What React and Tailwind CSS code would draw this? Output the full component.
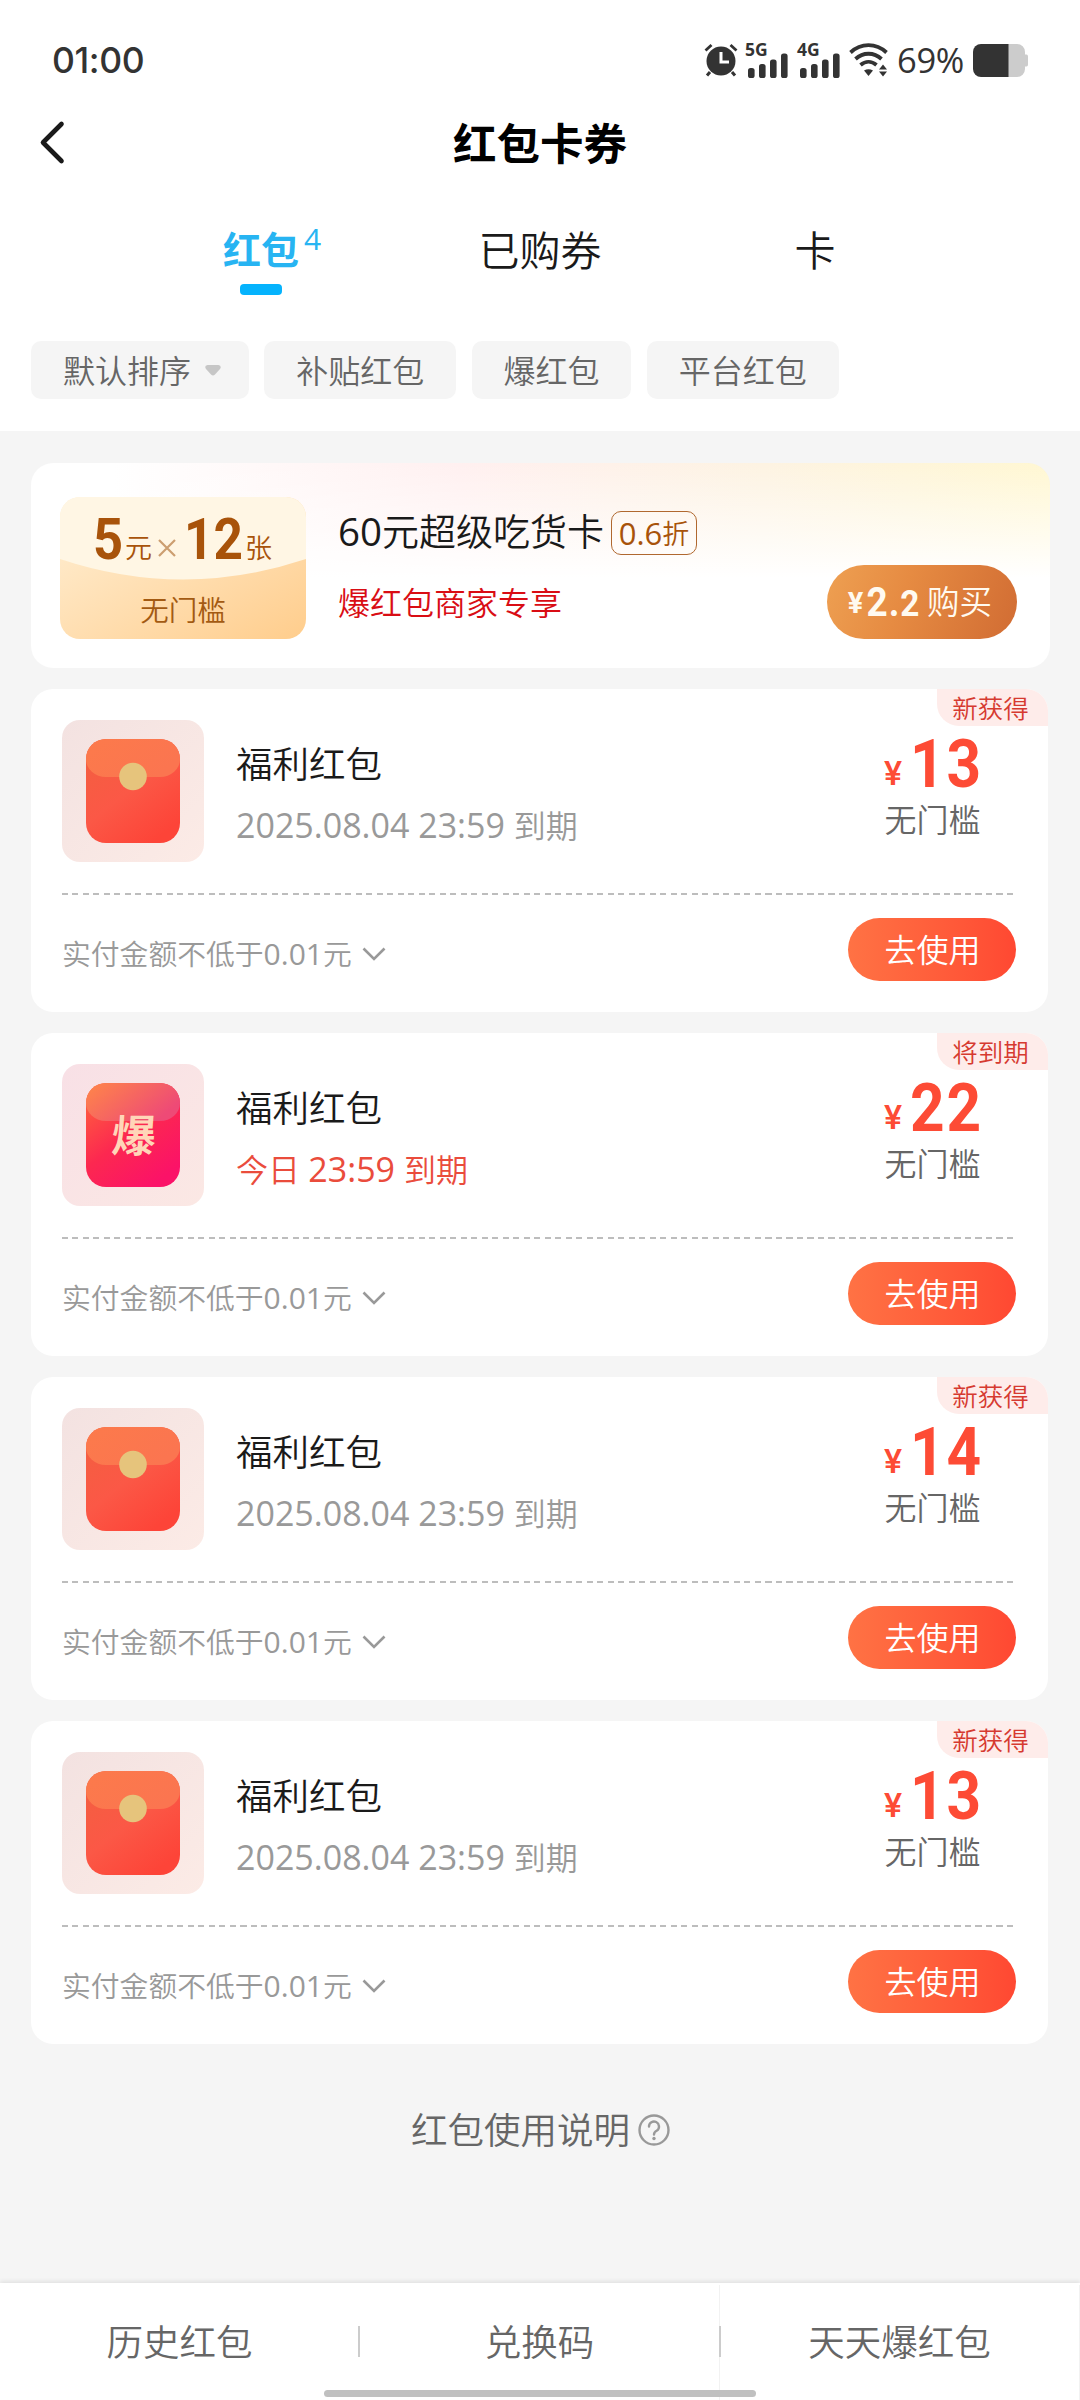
import { useId } from 'react'

const tabs = [
  { label: '红包', count: 4, active: true },
  { label: '已购券' },
  { label: '卡' },
]

const filters = [
  { label: '默认排序', caret: true },
  { label: '补贴红包' },
  { label: '爆红包' },
  { label: '平台红包' },
]

const coupons = [
  { id: 1, tag: '新获得', amount: 13, time: '2025.08.04 23:59' },
  { id: 2, tag: '将到期', amount: 22, day: '今日', time: '23:59', hot: true },
  { id: 3, tag: '新获得', amount: 14, time: '2025.08.04 23:59' },
  { id: 4, tag: '新获得', amount: 13, time: '2025.08.04 23:59' },
]

function Signal({ label }) {
  return (
    <svg width="44" height="36" viewBox="0 0 44 36" fill="#333" className="overflow-visible">
      <text x="-1" y="13.500" fontSize="17.500" fontWeight="700" fontFamily="Open Sans, sans-serif">{label}</text>
      <rect x="2" y="26" width="6.6" height="10" rx="2.6" />
      <rect x="13" y="22" width="6.6" height="14" rx="2.6" />
      <rect x="24" y="17.5" width="6.6" height="18.5" rx="2.6" />
      <rect x="35" y="11.500" width="6.600" height="24.500" rx="2.6" />
    </svg>
  )
}

function StatusBar() {
  return (
    <div className="flex h-[116px] items-center justify-between pl-[52px] pr-[52px] pt-1 text-[#333]">
      <span className="mt-[2px] font-[Inter] text-[35.500px] leading-none font-medium tracking-[-0.4px]">01:00</span>
      <div className="flex items-center">
        <svg width="34" height="34" viewBox="0 0 34 34" fill="none" stroke="#333" className="mr-2">
          <circle cx="17" cy="18" r="14.500" fill="#333" stroke="none" />
          <path d="M1.500 7.500 7.500 2M32.500 7.500 26.500 2" strokeWidth="2.8" />
          <path d="M6 29 3 32.500M28 29l3 3.500" strokeWidth="3" />
          <path d="M17 9v10h8" stroke="#fff" strokeWidth="3" />
        </svg>
        <Signal label="5G" />
        <span className="w-2" />
        <Signal label="4G" />
        <svg width="40" height="34" viewBox="0 0 40 34" fill="none" stroke="#333" strokeWidth="3.800" className="ml-[7px]">
          <path d="M1.500 9.500C12-.3 27-.3 37.500 9.500" />
          <path d="M6.500 16C14 9 25 9 32.500 16" />
          <path d="M11.500 22C16.500 17.800 22.500 17.800 27.500 22" />
          <path d="M15 27.500q4.500-2.500 9 0L19.500 33z" fill="#333" stroke="none" />
          <path d="M30 26.500h8L34 21.500zM30 28.500h8L34 33.500z" fill="#333" stroke="none" />
        </svg>
        <span className="ml-[8px] w-[76px] text-[34.500px] leading-none font-medium tracking-[-0.3px]">69%</span>
        <svg width="55" height="33" viewBox="0 0 55 33">
          <path d="M35 0H44a8 8 0 0 1 8 8v2.500h1.500q1.500 0 1.500 2v8q0 2-1.500 2H52V25a8 8 0 0 1-8 8H35z" fill="#ccc" />
          <path d="M8 0H35.500V33H8a8 8 0 0 1-8-8V8a8 8 0 0 1 8-8z" fill="#333" />
        </svg>
      </div>
    </div>
  )
}

function Header() {
  return (
    <header className="h-[431px] bg-white">
      <StatusBar />
      <div className="grid h-[56px] grid-cols-[1fr_auto_1fr] items-center pl-[39px] pr-[39px]">
        <svg width="28" height="46" viewBox="0 0 28 46" fill="none" stroke="#1a1a1a" strokeWidth="4.600" strokeLinecap="round" strokeLinejoin="round" className="-mt-[3px]">
          <path d="M22.500 4 4 22.500 22.500 41" />
        </svg>
        <h1 className="text-[43.500px] leading-none font-bold text-black">红包卡券</h1>
      </div>
      <nav className="mt-[50px] grid grid-cols-[278px_280px_270px] pl-[122px]">
        {tabs.map((tab) => (
          <div key={tab.label} className="flex flex-col items-center">
            <div className="relative flex h-[54px] items-center leading-none">
              {tab.active ? (
                <span className="text-[38px] font-bold text-[#27b4f2]">{tab.label}</span>
              ) : (
                <span className="mt-[2px] text-[41px] font-[350] text-[#1a1a1a]">{tab.label}</span>
              )}
              {tab.count ? (
                <span className="absolute top-0 left-[81px] text-[30px] leading-[34px] text-[#27b4f2]">{tab.count}</span>
              ) : null}
            </div>
            {tab.active ? <span className="mt-2 h-[11px] w-[42px] rounded-[4px] bg-[#05b3fd]" /> : null}
          </div>
        ))}
      </nav>
      <div className="mt-[46px] flex gap-[15.500px] px-[31px]">
        {filters.map((filter) => (
          <button key={filter.label} className="flex h-[58px] items-center rounded-[10px] bg-[#f5f5f5] px-[31.900px] pt-px text-[32px] leading-none font-[350] text-[#666]">
            {filter.label}
            {filter.caret ? (
              <svg width="16" height="11" viewBox="0 0 16 11" className="ml-[14px] -mr-1" fill="#c6c6c6">
                <path d="M2.500 0h11q3.500 1 1.500 4L10 9.500q-2 2-4 0L1 4Q-1 1 2.500 0z" />
              </svg>
            ) : null}
          </button>
        ))}
      </div>
    </header>
  )
}

// Roboto squeezed to DIN proportions
function Digits({ children, className }) {
  return <span className={`inline-block font-[Roboto] ${className}`}>{children}</span>
}

function SuperCard() {
  return (
    <section className="flex h-[205px] rounded-[22px] bg-white bg-[linear-gradient(180deg,rgba(255,255,255,0)_0%,#fff_56%),linear-gradient(90deg,#fff_8%,#fff0f0_42%,#fdf3e2_72%,#fff7d2_100%)] pl-[29px]">
      <div className="relative mt-[34px] h-[142px] w-[246px] overflow-hidden rounded-[20px] bg-gradient-to-br from-[#fff0d6] to-[#ffcd8c]">
        <svg width="246" height="142" viewBox="0 0 246 142" className="absolute inset-0">
          <path d="M0 0H246V62Q123 103 0 62z" fill="#fff6e4" />
        </svg>
        <div className="relative flex h-[82px] pl-[33px] text-[#a8530a]">
          <Digits className="mt-[15px] w-[32px] origin-left scale-x-[0.920] text-[57px] leading-[56px] font-bold">5</Digits>
          <span className="mt-[36px] w-[30px] text-[27px] leading-[30px] font-[350]">元</span>
          <svg width="18" height="18" viewBox="0 0 18 18" className="mt-[42px] ml-[3px]" stroke="#cc9e70" strokeWidth="2.200">
            <path d="M1 1 17 17M17 1 1 17" />
          </svg>
          <Digits className="mt-[15px] ml-[8px] w-[61px] origin-left scale-x-[0.900] text-[57px] leading-[56px] font-bold">12</Digits>
          <span className="mt-[36px] text-[27px] leading-[30px] font-[350]">张</span>
        </div>
        <p className="relative mt-[15px] text-center text-[28.500px] leading-[32px] font-[350] text-[#a35a12]">无门槛</p>
      </div>
      <div className="ml-[32px] flex-1">
        <div className="mt-[48px] flex h-[44px] items-center">
          <h2 className="-mt-[3px] text-[37px] leading-none font-[350] text-[#1a1a1a]"><span className="text-[38.500px] font-normal">60</span>元超级吃货卡</h2>
          <span className="ml-[7px] flex h-[44px] w-[86px] items-center justify-center rounded-[10px] border border-[#b0682f] text-[27px] leading-none font-[350] text-[#a8530a]"><span className="text-[31px] font-normal">0.6</span>折</span>
        </div>
        <p className="mt-[31px] text-[32px] leading-[34px] font-[350] text-[#d90d14]">爆红包商家专享</p>
      </div>
      <button className="mt-[102px] mr-[33px] flex h-[74px] w-[190px] items-center rounded-full bg-[linear-gradient(110deg,#eea052_0%,#e68b42_40%,#d16c33_100%)] pl-[18px] text-[32.500px] leading-none font-[350] text-[#fffaf0]">
        <Digits className="mt-[2px] w-[21px] text-[29px] font-bold">¥</Digits>
        <Digits className="w-[61px] origin-left scale-x-[0.900] text-[41px] font-bold tracking-[1px]">2.<span className="text-[37px]">2</span></Digits>
        购买
      </button>
    </section>
  )
}

function PacketIcon({ hot }) {
  const id = useId()
  return (
    <svg width="142" height="142" viewBox="0 0 142 142">
      <defs>
        <linearGradient id={`${id}bg`} x1="0" y1="0" x2="1" y2="1">
          <stop offset="0" stopColor={hot ? '#f8e0e6' : '#f3e2e1'} />
          <stop offset="1" stopColor={hot ? '#fbe8e4' : '#fcebe6'} />
        </linearGradient>
        <linearGradient id={`${id}body`} x1="0" y1="0" x2="0.700" y2="1">
          <stop offset="0" stopColor={hot ? '#ff6a3a' : '#f2603f'} />
          <stop offset="0.550" stopColor={hot ? '#fc2850' : '#fb5846'} />
          <stop offset="1" stopColor={hot ? '#fb1268' : '#fd4438'} />
        </linearGradient>
        <linearGradient id={`${id}flap`} x1="0" y1="0" x2="1" y2="0.500">
          <stop offset="0" stopColor={hot ? '#ff8748' : '#fc7a4b'} />
          <stop offset="1" stopColor={hot ? '#ee4a76' : '#fb7550'} />
        </linearGradient>
      </defs>
      <rect width="142" height="142" rx="18" fill={`url(#${id}bg)`} />
      <rect x="24" y="19" width="94" height="104" rx="20" fill={`url(#${id}body)`} />
      <path d="M24 39a20 20 0 0 1 20-20H98a20 20 0 0 1 20 20a20 18 0 0 1-20 18H44a20 18 0 0 1-20-18z" fill={`url(#${id}flap)`} />
      {hot ? (
        <text x="77" y="88" textAnchor="middle" fontSize="44" fontWeight="700" fontFamily="Noto Sans CJK SC, sans-serif" fill="#ffd6b8" transform="skewX(-4)">爆</text>
      ) : (
        <circle cx="71" cy="56.500" r="13.800" fill="#e6c47c" />
      )}
    </svg>
  )
}

function CouponCard({ coupon }) {
  return (
    <article className="relative h-[323px] w-[1017px] overflow-hidden rounded-[22px] bg-white pt-[31px] pl-[31px] font-[350]">
      <span className="absolute top-0 right-0 flex h-[37px] w-[111px] justify-center rounded-bl-[22px] bg-[#feecea] pr-[4px] text-[25.500px] leading-[38px] text-[#d63a30]">
        {coupon.tag}
      </span>
      <div className="flex h-[142px]">
        <PacketIcon hot={coupon.hot} />
        <div className="ml-[32px] flex-1">
          <h3 className="mt-[24px] text-[36.500px] leading-[40px] text-[#1a1a1a]">福利红包</h3>
          <p className={`mt-[24px] text-[32px] leading-[36px] ${coupon.hot ? 'text-[#ea4c3c]' : 'text-[#999]'}`}>
            {coupon.day ? `${coupon.day} ` : ''}
            <span className="text-[34px] leading-none font-normal">{coupon.time} </span>
            到期
          </p>
        </div>
        <div className="mr-[67px] w-[97px]">
          <div className="mt-[12px] flex h-[60px] justify-between pr-[3px] text-[#fd4b35]">
            <Digits className="mt-[24px] w-[18px] text-[34px] leading-[34px] font-medium">¥</Digits>
            <Digits className="-mt-px origin-right scale-x-[0.900] text-[67px] leading-[67px] font-bold tracking-[2px]">{coupon.amount}</Digits>
          </div>
          <p className="mt-[10px] text-center text-[32px] leading-[36px] text-[#666]">无门槛</p>
        </div>
      </div>
      <div className="mt-[31px] h-[2px] w-[951px] bg-[repeating-linear-gradient(90deg,#bdbdbd_0_6px,transparent_6px_10.500px)]" />
      <div className="flex h-[109px] items-center justify-between pr-[32px]">
        <div className="flex items-center pt-[8px] text-[28.800px] leading-none text-[#999]">
          <span>实付金额不低于<span className="text-[30px] font-normal">0.01</span>元</span>
          <svg width="24" height="14" viewBox="0 0 24 14" fill="none" stroke="#999" strokeWidth="2.600" className="ml-[10px]">
            <path d="M1.500 1.500 12 12 22.500 1.500" />
          </svg>
        </div>
        <button className="flex h-[63px] w-[168px] items-center justify-center rounded-full bg-gradient-to-r from-[#ff7244] to-[#ff4832] pt-px pl-px text-[32px] leading-none text-white">
          去使用
        </button>
      </div>
    </article>
  )
}

export default function App() {
  return (
    <div className="flex h-[2400px] w-[1080px] flex-col overflow-hidden bg-[#f5f5f5] font-['Open_Sans','Noto_Sans_CJK_SC',sans-serif] whitespace-nowrap">
      <Header />
      <main className="flex flex-1 flex-col gap-[21px] pt-8 pr-[30px] pl-[31px]">
        <SuperCard />
        {coupons.map((coupon) => (
          <CouponCard key={coupon.id} coupon={coupon} />
        ))}
        <div className="mt-[41px] flex h-[48px] items-center justify-center gap-2 text-[36.500px] leading-none font-[350] text-[#666]">
          红包使用说明
          <svg width="32" height="32" viewBox="0 0 32 32" fill="none" stroke="#999" strokeWidth="2.400">
            <circle cx="16" cy="16" r="14.500" />
            <path d="M11 12.500a5 5 0 1 1 8 4Q16 18 16 20.500" strokeLinecap="round" />
            <circle cx="16" cy="24.500" r="1.700" fill="#999" stroke="none" />
          </svg>
        </div>
      </main>
      <footer className="relative grid h-[117px] grid-cols-3 bg-white pt-[2px] text-[36.500px] font-[350] text-[#666] shadow-[0_-2px_4px_rgba(0,0,0,0.080)]">
        <div className="flex items-center justify-center border-r border-transparent">历史红包</div>
        <div className="flex items-center justify-center border-r border-[#f2f2f2]">兑换码</div>
        <div className="flex items-center justify-center border-r border-[#f2f2f2]">天天爆红包</div>
        <span className="absolute top-[43px] left-[358px] h-[31px] w-[2px] bg-[#ccc]" />
        <span className="absolute top-[43px] left-[719px] h-[31px] w-[2px] bg-[#ccc]" />
        <span className="absolute bottom-[3px] left-[324px] h-[7px] w-[432px] rounded-full bg-[#c0c0c0]" />
      </footer>
    </div>
  )
}
